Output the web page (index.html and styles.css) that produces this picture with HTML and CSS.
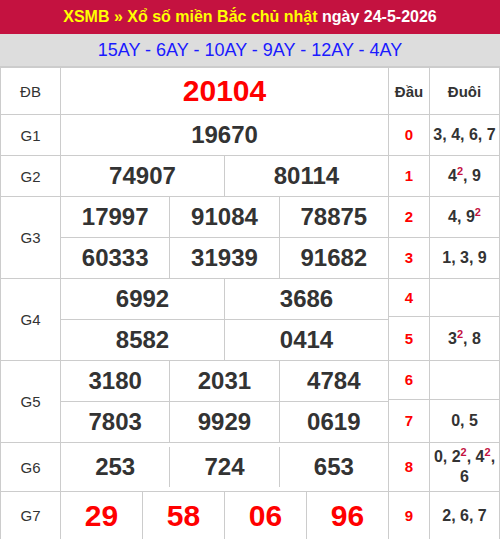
FILE: index.html
```html
<!DOCTYPE html>
<html lang="vi">
<head>
    <meta charset="UTF-8">
    <meta name="viewport" content="width=device-width, initial-scale=1.0">
    <title>XSMB chủ nhật 24-5-2026</title>
    <link rel="stylesheet" href="styles.css">
</head>
<body>

<div class="box">
    <div class="title">
        <span class="hl">XSMB » Xổ số miền Bắc chủ nhật</span> ngày 24-5-2026
    </div>
    <div class="codes">15AY - 6AY - 10AY - 9AY - 12AY - 4AY</div>

    <div class="result">
        <table class="prizes">
            <colgroup>
                <col class="c-label">
                <col><col><col><col><col><col><col><col><col><col><col><col>
            </colgroup>
            <tr class="r-db">
                <td class="label">ĐB</td>
                <td colspan="12" class="num special">20104</td>
            </tr>
            <tr>
                <td class="label">G1</td>
                <td colspan="12" class="num">19670</td>
            </tr>
            <tr>
                <td class="label">G2</td>
                <td colspan="6" class="num">74907</td>
                <td colspan="6" class="num">80114</td>
            </tr>
            <tr>
                <td class="label" rowspan="2">G3</td>
                <td colspan="4" class="num">17997</td>
                <td colspan="4" class="num">91084</td>
                <td colspan="4" class="num">78875</td>
            </tr>
            <tr>
                <td colspan="4" class="num">60333</td>
                <td colspan="4" class="num">31939</td>
                <td colspan="4" class="num">91682</td>
            </tr>
            <tr>
                <td class="label" rowspan="2">G4</td>
                <td colspan="6" class="num">6992</td>
                <td colspan="6" class="num">3686</td>
            </tr>
            <tr>
                <td colspan="6" class="num">8582</td>
                <td colspan="6" class="num">0414</td>
            </tr>
            <tr>
                <td class="label" rowspan="2">G5</td>
                <td colspan="4" class="num">3180</td>
                <td colspan="4" class="num">2031</td>
                <td colspan="4" class="num">4784</td>
            </tr>
            <tr>
                <td colspan="4" class="num">7803</td>
                <td colspan="4" class="num">9929</td>
                <td colspan="4" class="num">0619</td>
            </tr>
            <tr class="r-g6">
                <td class="label">G6</td>
                <td colspan="12" class="inner">
                    <div class="g6">
                        <span>253</span>
                        <span>724</span>
                        <span>653</span>
                    </div>
                </td>
            </tr>
            <tr class="r-g7">
                <td class="label">G7</td>
                <td colspan="3" class="num red">29</td>
                <td colspan="3" class="num red">58</td>
                <td colspan="3" class="num red">06</td>
                <td colspan="3" class="num red">96</td>
            </tr>
        </table>

        <table class="loto">
            <tr class="r-head">
                <th class="dau">Đầu</th>
                <th>Đuôi</th>
            </tr>
            <tr class="h41"><td class="dau">0</td><td>3, 4, 6, 7</td></tr>
            <tr class="h41"><td class="dau">1</td><td>4<sup>2</sup>, 9</td></tr>
            <tr class="h41"><td class="dau">2</td><td>4, 9<sup>2</sup></td></tr>
            <tr class="h41"><td class="dau">3</td><td>1, 3, 9</td></tr>
            <tr class="h38"><td class="dau">4</td><td></td></tr>
            <tr class="h44"><td class="dau">5</td><td>3<sup>2</sup>, 8</td></tr>
            <tr class="h39"><td class="dau">6</td><td></td></tr>
            <tr class="h43"><td class="dau">7</td><td>0, 5</td></tr>
            <tr class="h49"><td class="dau">8</td><td>0, 2<sup>2</sup>, 4<sup>2</sup>, 6</td></tr>
            <tr class="h48"><td class="dau">9</td><td>2, 6, 7</td></tr>
        </table>
    </div>
</div>

</body>
</html>
```

FILE: styles.css
```css
body {
    margin: 0;
    font-family: 'Liberation Sans', Arial, sans-serif;
    color: #333;
    background-color: #fff;
}

.box {
    width: 500px;
}

.title {
    height: 34px;
    line-height: 34px;
    background-color: #c41240;
    color: #fff;
    font-size: 16px;
    font-weight: bold;
    text-align: center;
}

.title .hl {
    color: #ffff00;
}

.codes {
    height: 33px;
    line-height: 33px;
    background-color: #ddd;
    color: #1a1aff;
    font-size: 18px;
    text-align: center;
    border-bottom: 1px solid #ccc;
    box-sizing: border-box;
}

.result {
    display: flex;
}

table {
    border-collapse: collapse;
    table-layout: fixed;
}

td, th {
    border: 1px solid #ccc;
    padding: 0;
    text-align: center;
    vertical-align: middle;
}

.prizes {
    width: 389px;
}

.prizes .c-label {
    width: 60px;
}

.prizes tr {
    height: 41px;
}

.prizes .r-db {
    height: 47px;
}

.prizes .r-g6 {
    height: 49px;
}

.prizes .r-g7 {
    height: 48px;
}

.label {
    font-size: 15px;
}

.num {
    font-size: 24px;
    font-weight: bold;
}

.num.special {
    font-size: 30px;
    color: #f00;
}

.num.red {
    font-size: 30px;
    color: #f00;
}

.g6 {
    display: flex;
    padding: 4px 0;
}

.g6 span {
    flex: 1;
    font-size: 24px;
    font-weight: bold;
    line-height: 40px;
}

.g6 span + span {
    border-left: 1px solid #ccc;
}

.loto {
    width: 112px;
    margin-left: -1px;
}

.loto .dau {
    width: 40px;
}

.loto th {
    font-size: 15px;
    font-weight: bold;
}

.loto td {
    font-size: 16px;
    font-weight: bold;
    line-height: 20px;
}

.loto td.dau {
    color: #f00;
    font-size: 15px;
}

.loto sup {
    color: #c41240;
    font-size: 11px;
    line-height: 0;
}

.r-head { height: 47px; }
.h38 { height: 38px; }
.h39 { height: 39px; }
.h41 { height: 41px; }
.h43 { height: 43px; }
.h44 { height: 44px; }
.h48 { height: 48px; }
.h49 { height: 49px; }
```
